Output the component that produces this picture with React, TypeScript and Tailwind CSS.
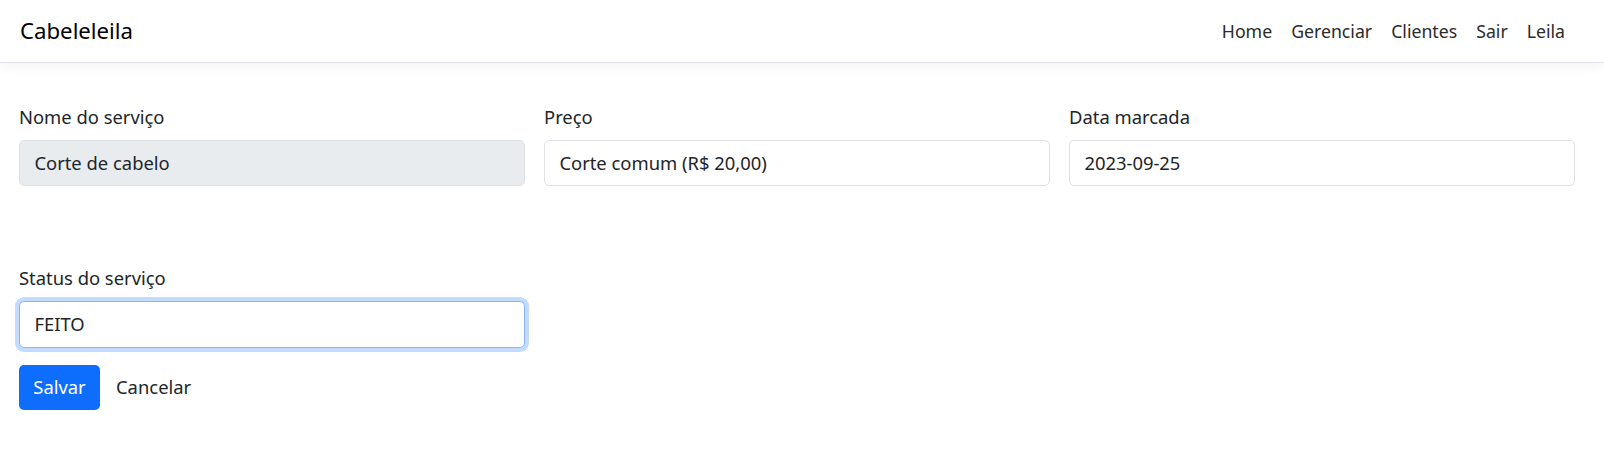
import React from "react";

export default function App() {
  const font = { fontFamily: '"Segoe UI", "Noto Sans", "Open Sans", sans-serif' };
  return (
    <div className="min-h-screen bg-white text-[#212529]" style={font}>
      <nav className="relative flex h-[63px] items-center justify-between border-b border-[#dee2e6] bg-white pl-[20px] pr-[39px] shadow-[0_3px_14px_rgba(0,0,0,0.05)]">
        <span className="text-[22.2px] leading-none text-black">Cabeleleila</span>
        <div className="flex items-center gap-[19px] text-[17.7px] text-[#2b2b2b]">
          <a>Home</a>
          <a>Gerenciar</a>
          <a>Clientes</a>
          <a>Sair</a>
          <a>Leila</a>
        </div>
      </nav>
      <main className="pl-[19px] pt-[40px] text-[18.4px]">
        <div className="grid w-[1556px] grid-cols-3 gap-x-[19px]">
          <div className="flex flex-col">
            <label className="mb-[8px] leading-[28.8px]">Nome do serviço</label>
            <div className="flex h-[46px] items-center rounded-[5px] border border-[#dee2e6] bg-[#e9ecef] px-[14.4px]">
              Corte de cabelo
            </div>
          </div>
          <div className="flex flex-col">
            <label className="mb-[8px] leading-[28.8px]">Preço</label>
            <div className="flex h-[46px] items-center rounded-[5px] border border-[#dee2e6] bg-white px-[14.4px]">
              Corte comum (R$ 20,00)
            </div>
          </div>
          <div className="flex flex-col">
            <label className="mb-[8px] leading-[28.8px]">Data marcada</label>
            <div className="flex h-[46px] items-center rounded-[5px] border border-[#dee2e6] bg-white px-[14.4px]">
              2023-09-25
            </div>
          </div>
        </div>
        <div className="mt-[78px] flex w-[506px] flex-col">
          <label className="mb-[8px] leading-[28.8px]">Status do serviço</label>
          <div className="flex h-[47px] items-center rounded-[5px] border border-[#86b7fe] bg-white px-[14.4px] shadow-[0_0_0_4px_rgba(13,110,253,0.25)]">
            FEITO
          </div>
        </div>
        <div className="mt-[17px] flex items-center gap-[16px]">
          <button className="h-[45px] w-[81px] rounded-[5px] bg-[#0d6efd] text-white">Salvar</button>
          <span>Cancelar</span>
        </div>
      </main>
    </div>
  );
}
